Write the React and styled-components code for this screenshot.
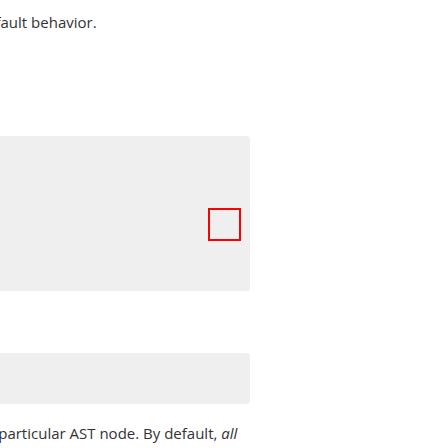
import React from 'react';
import styled, { createGlobalStyle } from 'styled-components';

const GlobalStyle = createGlobalStyle`
  html, body {
    margin: 0;
    padding: 0;
    background: #ffffff;
    overflow: hidden;
  }
  body {
    font-family: "Open Sans", "Noto Sans", sans-serif;
    color: #333333;
  }
`;

const Page = styled.main`
  width: 448px;
  height: 448px;
  overflow: hidden;
`;

const Column = styled.div`
  display: flex;
  flex-direction: column;
  width: 250px;
`;

const Text = styled.p`
  font-size: 15px;
  line-height: 24px;
  margin: ${(p) => p.$margin || '0'};
  white-space: nowrap;

  em {
    font-style: italic;
  }
`;

const Panel = styled.div`
  background: #efefef;
  border-radius: 0 3px 3px 0;
  height: ${(p) => p.$height}px;
  margin-top: ${(p) => p.$top}px;
  display: flex;
  align-items: flex-start;
  justify-content: flex-end;
  padding: ${(p) => p.$pad || '0'};
  box-sizing: border-box;
`;

const Marker = styled.div`
  width: 33px;
  height: 33px;
  box-sizing: border-box;
  border: 2px solid #ff0000;
`;

export default function App() {
  return (
    <Page>
      <GlobalStyle />
      <Column>
        <Text $margin="10px 0 0 -49px">the default behavior.</Text>
        <Panel $height={155} $top={102} $pad="72px 9px 0 0">
          <Marker />
        </Panel>
        <Panel $height={51} $top={62} />
        <Text $margin="17px 0 0 -14px">
          a particular AST node. By default, <em>all</em>
        </Text>
      </Column>
    </Page>
  );
}
